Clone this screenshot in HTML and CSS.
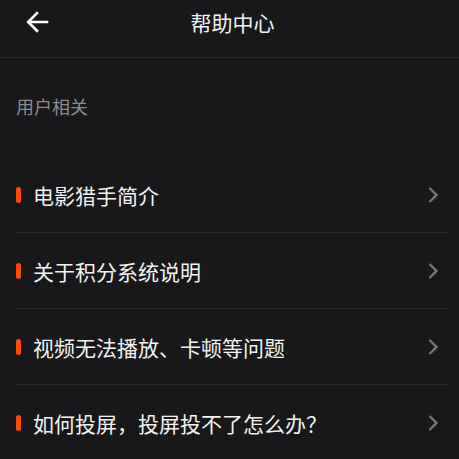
FILE: index.html
```html
<html>
<head>
  <meta http-equiv="Content-type" content="text/html;charset=UTF-8">
  <meta name="viewport" content="width=device-width, initial-scale=1.0"/>
  <title>帮助中心</title>
  <link rel="stylesheet" href="styles.css">
</head>
<body>
  <div id="main">
    <div id="header">
      <div class="back">
        <svg width="24" height="24" viewBox="0 0 24 24">
          <path d="M22 12H3.5M12 3.2L3.2 12L12 20.8" fill="none" stroke="#ffffff" stroke-width="2.6" stroke-linecap="square"/>
        </svg>
      </div>
      <div class="title">帮助中心</div>
    </div>
    <div class="section">用户相关</div>
    <div class="list">
      <div class="row">
        <span class="mark"></span>
        <span class="label">电影猎手简介</span>
        <svg class="chev" width="12" height="18" viewBox="0 0 12 18"><path d="M2.5 2L9.5 9L2.5 16" fill="none" stroke="#77777a" stroke-width="2.4"/></svg>
      </div>
      <div class="row">
        <span class="mark"></span>
        <span class="label">关于积分系统说明</span>
        <svg class="chev" width="12" height="18" viewBox="0 0 12 18"><path d="M2.5 2L9.5 9L2.5 16" fill="none" stroke="#77777a" stroke-width="2.4"/></svg>
      </div>
      <div class="row">
        <span class="mark"></span>
        <span class="label">视频无法播放、卡顿等问题</span>
        <svg class="chev" width="12" height="18" viewBox="0 0 12 18"><path d="M2.5 2L9.5 9L2.5 16" fill="none" stroke="#77777a" stroke-width="2.4"/></svg>
      </div>
      <div class="row">
        <span class="mark"></span>
        <span class="label">如何投屏，投屏投不了怎么办？</span>
        <svg class="chev" width="12" height="18" viewBox="0 0 12 18"><path d="M2.5 2L9.5 9L2.5 16" fill="none" stroke="#77777a" stroke-width="2.4"/></svg>
      </div>
    </div>
  </div>
</body>
</html>
```
FILE: styles.css
```css
body{
    margin:0;
    background:#18181a;
    font-family:"Noto Sans CJK SC", "Noto Sans", sans-serif;
    color:#f2f2f2;
}
#main{
    width:100%;
}
#header{
    position:relative;
    height:44px;
    padding-bottom:13px;
    border-bottom:1px solid #29292c;
    display:flex;
    align-items:center;
    justify-content:center;
}
#header .back{
    position:absolute;
    left:25px;
    top:10px;
    width:24px;
    height:24px;
}
#header .title{
    font-size:21px;
    line-height:44px;
    margin-left:6px;
}
.section{
    margin-top:35px;
    padding-left:16px;
    font-size:18px;
    line-height:26px;
    color:#8c8c8e;
}
.list{
    margin-top:38px;
    padding-left:16px;
    padding-right:10px;
}
.row{
    height:75px;
    display:flex;
    align-items:center;
    border-bottom:1px solid #29292c;
}
.row:last-child{
    border-bottom:none;
}
.mark{
    width:5px;
    height:16px;
    border-radius:3px;
    background:#ff4a0a;
    margin-right:12px;
}
.label{
    flex:1;
    font-size:21px;
}
.chev{
    margin-right:10px;
}
```
